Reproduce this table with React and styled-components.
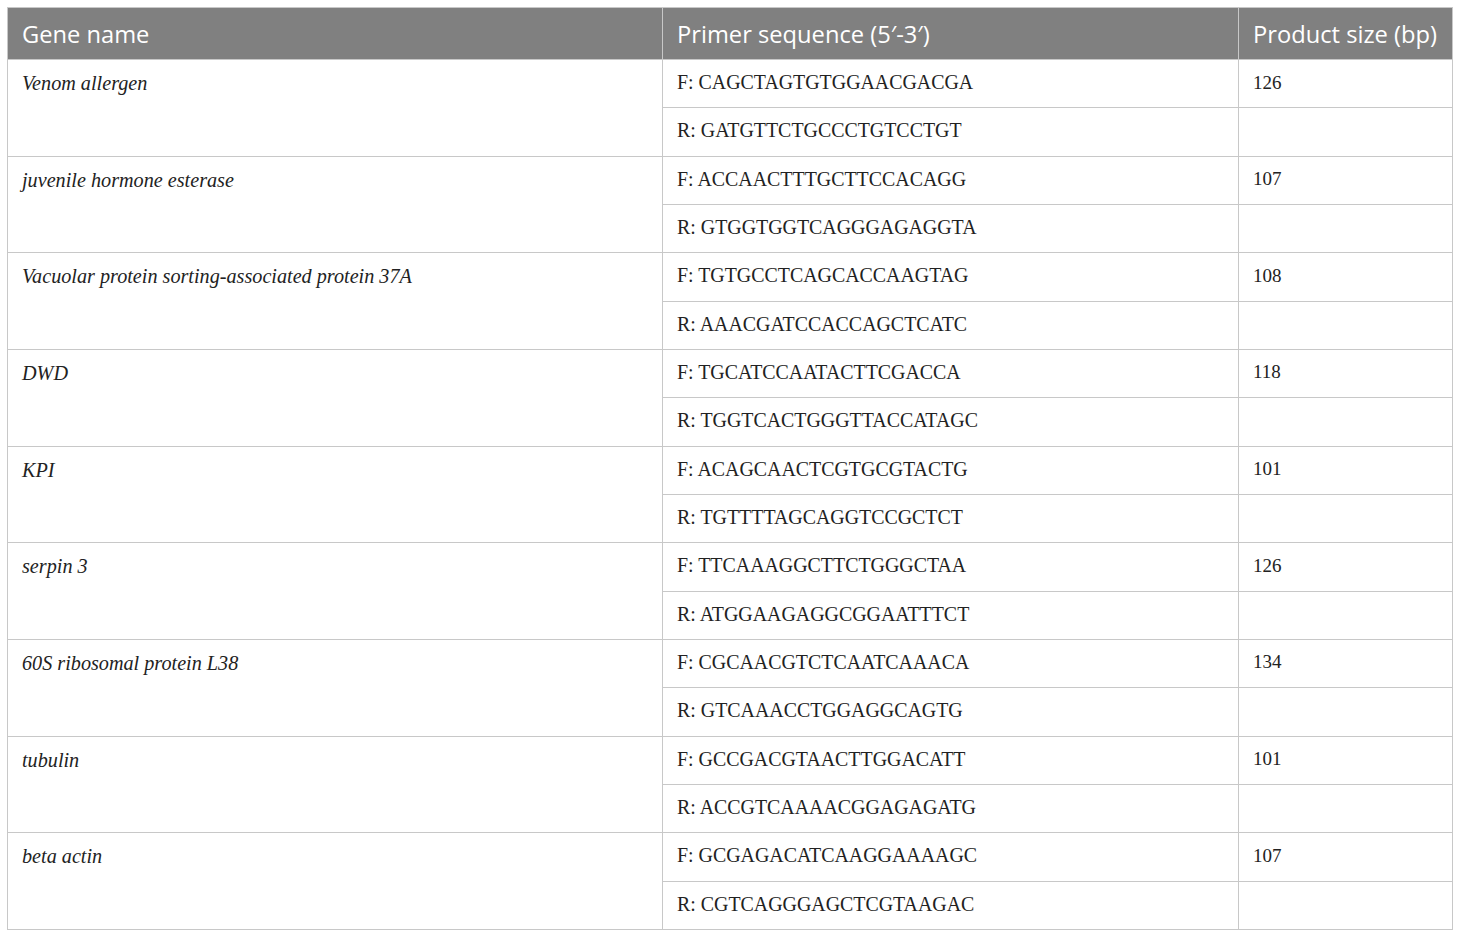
import React from "react";
import styled, { createGlobalStyle } from "styled-components";

const Global = createGlobalStyle`
  html, body { margin: 0; padding: 0; background: #fff; }
  body { font-family: "Liberation Serif", serif; }
`;

const Page = styled.div`
  padding: 7px 8px 7px 7px;
`;

const Table = styled.table`
  width: 1445px;
  border-collapse: collapse;
  table-layout: fixed;
  border: 1px solid #c8c8c8;
`;

const HeadCell = styled.th`
  background: #808080;
  color: #fff;
  font-family: "Open Sans", sans-serif;
  font-weight: 400;
  font-size: 23.7px;
  text-align: left;
  height: 52px;
  padding: 0 0 0 14px;
  box-sizing: border-box;
  border-left: 1px solid #c8c8c8;
  white-space: nowrap;
`;

const Cell = styled.td`
  font-family: "Liberation Serif", serif;
  font-size: ${(p) => (p.$num ? "19px" : p.$italic ? "20.2px" : "19.9px")};
  font-style: ${(p) => (p.$italic ? "italic" : "normal")};
  color: #222;
  vertical-align: top;
  padding: ${(p) => (p.$num ? "11.5px" : "11px")} 0 0 14px;
  height: 48.33px;
  box-sizing: border-box;
  border: 1px solid #c8c8c8;
  line-height: 1.2;
  white-space: nowrap;
`;

const rows = [
  ["Venom allergen", "CAGCTAGTGTGGAACGACGA", "GATGTTCTGCCCTGTCCTGT", "126"],
  ["juvenile hormone esterase", "ACCAACTTTGCTTCCACAGG", "GTGGTGGTCAGGGAGAGGTA", "107"],
  ["Vacuolar protein sorting-associated protein 37A", "TGTGCCTCAGCACCAAGTAG", "AAACGATCCACCAGCTCATC", "108"],
  ["DWD", "TGCATCCAATACTTCGACCA", "TGGTCACTGGGTTACCATAGC", "118"],
  ["KPI", "ACAGCAACTCGTGCGTACTG", "TGTTTTAGCAGGTCCGCTCT", "101"],
  ["serpin 3", "TTCAAAGGCTTCTGGGCTAA", "ATGGAAGAGGCGGAATTTCT", "126"],
  ["60S ribosomal protein L38", "CGCAACGTCTCAATCAAACA", "GTCAAACCTGGAGGCAGTG", "134"],
  ["tubulin", "GCCGACGTAACTTGGACATT", "ACCGTCAAAACGGAGAGATG", "101"],
  ["beta actin", "GCGAGACATCAAGGAAAAGC", "CGTCAGGGAGCTCGTAAGAC", "107"],
];

export default function App() {
  return (
    <Page>
      <Global />
      <Table>
        <colgroup>
          <col style={{ width: "655px" }} />
          <col style={{ width: "576px" }} />
          <col style={{ width: "214px" }} />
        </colgroup>
        <thead>
          <tr>
            <HeadCell>Gene name</HeadCell>
            <HeadCell>Primer sequence (5′-3′)</HeadCell>
            <HeadCell>Product size (bp)</HeadCell>
          </tr>
        </thead>
        <tbody>
          {rows.map(([gene, f, r, size]) => (
            <React.Fragment key={gene}>
              <tr>
                <Cell $italic rowSpan={2}>{gene}</Cell>
                <Cell>F: {f}</Cell>
                <Cell $num>{size}</Cell>
              </tr>
              <tr>
                <Cell>R: {r}</Cell>
                <Cell $num />
              </tr>
            </React.Fragment>
          ))}
        </tbody>
      </Table>
    </Page>
  );
}
